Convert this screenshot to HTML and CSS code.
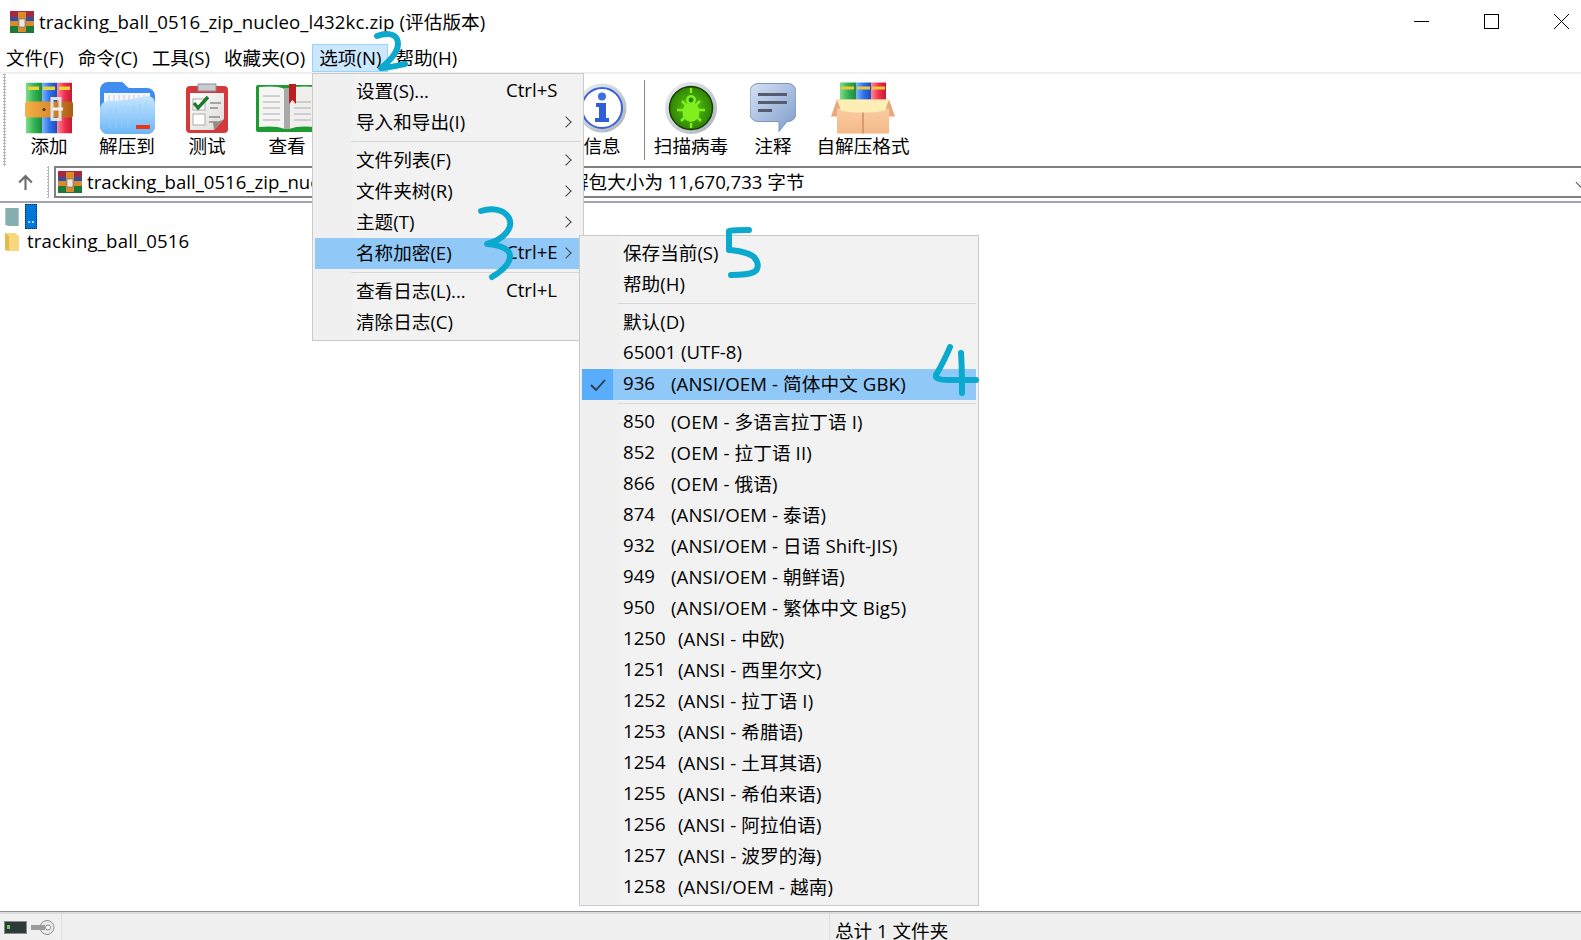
FILE: index.html
```html
<!DOCTYPE html>
<html lang="zh-CN">
<head>
<meta charset="utf-8">
<title>tracking_ball_0516_zip_nucleo_l432kc.zip (评估版本)</title>
<link rel="stylesheet" href="styles.css">
</head>
<body>
<svg class="defs" aria-hidden="true">
  <defs>
    <linearGradient id="gGreen" x1="0" x2="1" y1="0" y2="0"><stop offset="0" stop-color="#7fdc8a"/><stop offset=".5" stop-color="#34b457"/><stop offset="1" stop-color="#1c8a3c"/></linearGradient>
    <linearGradient id="gBlue" x1="0" x2="1" y1="0" y2="0"><stop offset="0" stop-color="#7fb4ff"/><stop offset=".5" stop-color="#2f73ea"/><stop offset="1" stop-color="#1b4db8"/></linearGradient>
    <linearGradient id="gRed" x1="0" x2="1" y1="0" y2="0"><stop offset="0" stop-color="#ff8a9c"/><stop offset=".5" stop-color="#f0324f"/><stop offset="1" stop-color="#c21a35"/></linearGradient>
    <linearGradient id="gBelt" x1="0" x2="1" y1="0" y2="0"><stop offset="0" stop-color="#f4b24a"/><stop offset=".55" stop-color="#d98a2b"/><stop offset="1" stop-color="#a85c14"/></linearGradient>
    <linearGradient id="gFolder" x1="0" x2="0" y1="0" y2="1"><stop offset="0" stop-color="#c6e6ff"/><stop offset="1" stop-color="#6cb6f7"/></linearGradient>
    <linearGradient id="gPaper" x1="0" x2="1" y1="0" y2="1"><stop offset="0" stop-color="#fff"/><stop offset="1" stop-color="#dcd8d4"/></linearGradient>
    <linearGradient id="gRing" x1="0" x2="1" y1="0" y2="1"><stop offset="0" stop-color="#eef1f6"/><stop offset="1" stop-color="#a9b0ba"/></linearGradient>
    <radialGradient id="gBug"><stop offset="0" stop-color="#5ecb12"/><stop offset="1" stop-color="#2d8404"/></radialGradient>
    <linearGradient id="gNote" x1="0" x2="1" y1="0" y2="1"><stop offset="0" stop-color="#d5e1f5"/><stop offset="1" stop-color="#7d9cc9"/></linearGradient>
    <linearGradient id="gBox" x1="0" x2="0" y1="0" y2="1"><stop offset="0" stop-color="#f9cca0"/><stop offset="1" stop-color="#f4b98a"/></linearGradient>
    <symbol id="rar" viewBox="0 0 48 51" preserveAspectRatio="none">
      <rect x="1" y="0" width="16" height="51" fill="url(#gGreen)"/>
      <rect x="17" y="0" width="15" height="51" fill="url(#gBlue)"/>
      <rect x="32" y="0" width="15" height="51" fill="url(#gRed)"/>
      <rect x="3" y="4" width="11" height="3.5" fill="#ecd33a"/>
      <rect x="18" y="4" width="12" height="3.5" fill="#ecd33a"/>
      <rect x="34" y="4" width="11" height="3.5" fill="#ecd33a"/>
      <rect x="0" y="19" width="48" height="16" rx="2" fill="url(#gBelt)"/>
      <path d="M27 16h8v21h-8z" fill="none" stroke="#dfe2e6" stroke-width="3"/>
      <rect x="28" y="25" width="10" height="3" fill="#f3f3f3"/>
      <circle cx="19" cy="27" r="1.6" fill="#5d3208"/>
    </symbol>
    <symbol id="rar-small" viewBox="0 0 24 22" preserveAspectRatio="none">
      <rect x="0" y="0" width="24" height="22" fill="#7a2030"/>
      <rect x="0" y="0" width="24" height="6" fill="#a8283f"/>
      <rect x="0" y="6" width="24" height="5" fill="#2f4fa0"/>
      <rect x="0" y="15" width="24" height="7" fill="#1c7a38"/>
      <rect x="0" y="10" width="24" height="5" fill="#d98a2b"/>
      <rect x="8" y="1" width="8" height="20" fill="#d98a2b"/>
      <rect x="9" y="8" width="6" height="8" fill="#e8e8e8" stroke="#777" stroke-width=".7"/>
    </symbol>
  </defs>
</svg>

<div class="window">
  <header class="titlebar">
    <svg class="title-icon"><use href="#rar-small"/></svg>
    <span class="title-text">tracking_ball_0516_zip_nucleo_l432kc.zip (评估版本)</span>
    <div class="controls">
      <svg class="ctl" viewBox="0 0 16 16"><path d="M0 7.500h15" stroke="#000" fill="none"/></svg>
      <svg class="ctl" viewBox="0 0 16 16"><rect x=".5" y=".5" width="14" height="14" stroke="#000" fill="none"/></svg>
      <svg class="ctl" viewBox="0 0 16 16"><path d="M0 0l15 15M15 0L0 15" stroke="#000" fill="none"/></svg>
    </div>
  </header>

  <nav class="menubar">
    <span class="mitem">文件(F)</span>
    <span class="mitem">命令(C)</span>
    <span class="mitem">工具(S)</span>
    <span class="mitem">收藏夹(O)</span>
    <span class="mitem mitem-open">选项(N)</span>
    <span class="mitem">帮助(H)</span>
  </nav>

  <section class="toolbar">
    <div class="tool w78">
      <svg class="ticon" width="48" height="51" viewBox="0 0 48 51"><use href="#rar"/></svg>
      <span>添加</span>
    </div>
    <div class="tool w78">
      <svg class="ticon" width="55" height="52" viewBox="0 0 55 52">
        <path d="M0 8a8 8 0 0 1 8-8h13c4 0 5 6 9 6h17a8 8 0 0 1 8 8v30a8 8 0 0 1-8 8H8a8 8 0 0 1-8-8z" fill="#3f8df0"/>
        <path d="M4 11h46v16H4z" fill="#f4f6fa"/>
        <path d="M9 13v8M14 13v8M19 13v8M24 13v8M29 13v8M34 13v8M39 13v8M44 13v8" stroke="#c3ccd8"/>
        <path d="M0 28c0-5 3-9 8-9 12 0 26-2 39-5 5 0 8 3 8 8v22a8 8 0 0 1-8 8H8a8 8 0 0 1-8-8z" fill="url(#gFolder)"/>
        <path d="M10 26v20M16 25v21M22 25v21M28 24v22M34 23v15M40 22v16M46 20v18" stroke="#9ccdf6" stroke-width=".8"/>
        <rect x="36" y="43" width="14" height="4" fill="#ee3516"/>
      </svg>
      <span>解压到</span>
    </div>
    <div class="tool w82">
      <svg class="ticon" width="42" height="50" viewBox="0 0 42 50">
        <rect x="0" y="3" width="42" height="47" rx="4" fill="#d4393c"/>
        <path d="M4 10h34v26l-10 11H4z" fill="url(#gPaper)"/>
        <path d="M28 47l10-11c-3 2-7 3-11 3z" fill="#8f8c8a"/>
        <path d="M12 1h18v7H12z" fill="#c9ccd0" stroke="#8b8f95"/>
        <rect x="7" y="16" width="12" height="11" fill="#fff" stroke="#aaa"/>
        <rect x="7" y="31" width="12" height="11" fill="#fff" stroke="#aaa"/>
        <path d="M8 20l4 5 10-11" fill="none" stroke="#1d7a2c" stroke-width="3.400"/>
        <path d="M24 20h11M24 25h8M23 34h11M23 39h8" stroke="#8d8d8d" stroke-width="1.500"/>
      </svg>
      <span>测试</span>
    </div>
    <div class="tool w78">
      <svg class="ticon" width="62" height="48" viewBox="0 0 62 48">
        <rect x="0" y="1" width="62" height="47" rx="2" fill="#1e9a33"/>
        <path d="M3 3c10-1 20-1 26 2v40c-7-3-17-3-26-2z" fill="#f5f5f4"/>
        <path d="M59 3c-10-1-20-1-26 2v40c7-3 17-3 26-2z" fill="#f0efee"/>
        <rect x="28" y="4" width="6" height="41" fill="#a9a9a9"/>
        <path d="M7 12h17M7 18h17M7 24h17M7 30h17M7 36h17M38 18h17M38 24h17M38 30h17M38 36h17" stroke="#c4c4c4" stroke-width="1.500"/>
        <path d="M33 0h7v20l-3.500-4-3.500 4z" fill="#b71f22"/>
      </svg>
      <span>查看</span>
    </div>
    <div class="tool-gap"></div>
    <div class="tool w76">
      <svg class="ticon" width="50" height="50" viewBox="0 0 50 50">
        <circle cx="25" cy="25" r="24.500" fill="url(#gRing)"/>
        <circle cx="25" cy="25" r="20" fill="#fff" stroke="#3a62d8" stroke-width="2"/>
        <circle cx="25" cy="13.500" r="4" fill="#3d6fe0"/>
        <path d="M19 20h10v15h3v4H18v-4h4V24h-3z" fill="#2f5ed6"/>
      </svg>
      <span>信息</span>
    </div>
    <span class="tool-sep"></span>
    <div class="tool w80">
      <svg class="ticon" width="52" height="52" viewBox="0 0 52 52">
        <circle cx="26" cy="26" r="26" fill="url(#gRing)"/>
        <circle cx="26" cy="26" r="21.500" fill="url(#gBug)" stroke="#1b3d02" stroke-width="1.500"/>
        <ellipse cx="26" cy="30" rx="8.500" ry="10" fill="#7fef1f"/>
        <circle cx="26" cy="18" r="5" fill="#7fef1f"/>
        <path d="M17 19l5 5M35 19l-5 5M12 28h9M40 28h-9M16 39l6-6M36 39l-6-6M26 6v5M26 41v5" stroke="#7fef1f" stroke-width="2.500" fill="none"/>
        <circle cx="26" cy="18" r="2.400" fill="#2d8404"/>
      </svg>
      <span>扫描病毒</span>
    </div>
    <div class="tool w84">
      <svg class="ticon" width="46" height="49" viewBox="0 0 46 49">
        <path d="M8 0h30a8 8 0 0 1 8 8v22a8 8 0 0 1-8 8h-1L29 48V38H8a8 8 0 0 1-8-8V8a8 8 0 0 1 8-8z" fill="url(#gNote)" stroke="#7d95bb"/>
        <path d="M8 11h29M8 19h29M8 27h14" stroke="#555d6c" stroke-width="3"/>
      </svg>
      <span>注释</span>
    </div>
    <div class="tool w96">
      <svg class="ticon" width="64" height="51" viewBox="0 0 64 51">
        <rect x="9" y="0" width="16" height="22" fill="url(#gGreen)"/>
        <rect x="25" y="0" width="15" height="22" fill="url(#gBlue)"/>
        <rect x="40" y="0" width="15" height="22" fill="url(#gRed)"/>
        <rect x="10" y="4" width="13" height="3" fill="#ecc93a"/>
        <rect x="26" y="4" width="13" height="3" fill="#ecc93a"/>
        <rect x="41" y="4" width="13" height="3" fill="#ecc93a"/>
        <path d="M6 17h52l6 17H0z" fill="#e9a77c"/>
        <rect x="6" y="26" width="52" height="25" fill="url(#gBox)"/>
        <path d="M6 17h52l-4 11c-14 3-30 3-44 0z" fill="#fdeeb5"/>
        <path d="M32 30v21" stroke="#cf8b62" stroke-width="1.500"/>
      </svg>
      <span>自解压格式</span>
    </div>
  </section>

  <section class="addressbar">
    <div class="upcell">
      <svg class="up" viewBox="0 0 16 16"><path d="M8 15V2M2 8l6-6 6 6" fill="none" stroke="#6f6f6f" stroke-width="2"/></svg>
      <span class="grip"></span>
    </div>
    <div class="field">
      <svg class="addr-icon"><use href="#rar-small"/></svg>
      <span class="addr-text">tracking_ball_0516_zip_nucleo_l432kc.zip - ZIP 压缩文件, 解包大小为 11,670,733 字节</span>
      <span class="drop"></span>
    </div>
  </section>

  <main class="list">
    <div class="row">
      <svg class="ficon" viewBox="0 0 14 21"><path d="M0 1h14v19H4l-4-1z" fill="#85aeb0"/></svg>
      <span class="updir">..</span>
    </div>
    <div class="row">
      <svg class="ficon" viewBox="0 0 14 20"><path d="M0 1h10l4 3v15H4l-4-1z" fill="#f8d77f"/><path d="M0 1l4 3v15l-4-1z" fill="#e4b94e"/></svg>
      <span class="fname">tracking_ball_0516</span>
    </div>
  </main>

  <footer class="statusbar">
    <div class="st-icons">
      <svg width="23" height="13" viewBox="0 0 23 13"><rect x=".5" y=".5" width="22" height="12" fill="#2d3a3a" stroke="#8a8a8a"/><rect x="3" y="4" width="3" height="4" fill="#5fd35f"/></svg>
      <svg width="25" height="17" viewBox="0 0 25 17"><circle cx="17" cy="8.500" r="7" fill="#e8e8e8" stroke="#8f8f8f"/><rect x="1" y="6" width="14" height="5" fill="#9b9b9b"/><circle cx="18" cy="8.500" r="2.500" fill="#fff" stroke="#888"/></svg>
    </div>
    <div class="st-mid"></div>
    <div class="st-total">总计 1 文件夹</div>
  </footer>

  <div class="menu menu-main">
    <div class="mrow"><span class="mlabel">设置(S)...</span><span class="mkey">Ctrl+S</span></div>
    <div class="mrow"><span class="mlabel">导入和导出(I)</span><span class="arrow"></span></div>
    <div class="msep"></div>
    <div class="mrow"><span class="mlabel">文件列表(F)</span><span class="arrow"></span></div>
    <div class="mrow"><span class="mlabel">文件夹树(R)</span><span class="arrow"></span></div>
    <div class="mrow"><span class="mlabel">主题(T)</span><span class="arrow"></span></div>
    <div class="mrow mrow-on"><span class="mlabel">名称加密(E)</span><span class="mkey">Ctrl+E</span><span class="arrow"></span></div>
    <div class="msep"></div>
    <div class="mrow"><span class="mlabel">查看日志(L)...</span><span class="mkey">Ctrl+L</span></div>
    <div class="mrow"><span class="mlabel">清除日志(C)</span></div>
  </div>

  <div class="menu menu-sub">
    <div class="mrow"><span class="mlabel">保存当前(S)</span></div>
    <div class="mrow"><span class="mlabel">帮助(H)</span></div>
    <div class="msep"></div>
    <div class="mrow"><span class="mlabel">默认(D)</span></div>
    <div class="mrow"><span class="mlabel">65001 (UTF-8)</span></div>
    <div class="mrow mrow-on mrow-checked">
      <span class="check"><svg width="16" height="12" viewBox="0 0 16 12"><path d="M1 6l5 5L15 1" fill="none" stroke="#2c3a48" stroke-width="1.800"/></svg></span>
      <span class="code">936</span><span class="cname">(ANSI/OEM - 简体中文 GBK)</span>
    </div>
    <div class="msep"></div>
    <div class="mrow"><span class="code">850</span><span class="cname">(OEM - 多语言拉丁语 I)</span></div>
    <div class="mrow"><span class="code">852</span><span class="cname">(OEM - 拉丁语 II)</span></div>
    <div class="mrow"><span class="code">866</span><span class="cname">(OEM - 俄语)</span></div>
    <div class="mrow"><span class="code">874</span><span class="cname">(ANSI/OEM - 泰语)</span></div>
    <div class="mrow"><span class="code">932</span><span class="cname">(ANSI/OEM - 日语 Shift-JIS)</span></div>
    <div class="mrow"><span class="code">949</span><span class="cname">(ANSI/OEM - 朝鲜语)</span></div>
    <div class="mrow"><span class="code">950</span><span class="cname">(ANSI/OEM - 繁体中文 Big5)</span></div>
    <div class="mrow"><span class="code code4">1250</span><span class="cname">(ANSI - 中欧)</span></div>
    <div class="mrow"><span class="code code4">1251</span><span class="cname">(ANSI - 西里尔文)</span></div>
    <div class="mrow"><span class="code code4">1252</span><span class="cname">(ANSI - 拉丁语 I)</span></div>
    <div class="mrow"><span class="code code4">1253</span><span class="cname">(ANSI - 希腊语)</span></div>
    <div class="mrow"><span class="code code4">1254</span><span class="cname">(ANSI - 土耳其语)</span></div>
    <div class="mrow"><span class="code code4">1255</span><span class="cname">(ANSI - 希伯来语)</span></div>
    <div class="mrow"><span class="code code4">1256</span><span class="cname">(ANSI - 阿拉伯语)</span></div>
    <div class="mrow"><span class="code code4">1257</span><span class="cname">(ANSI - 波罗的海)</span></div>
    <div class="mrow"><span class="code code4">1258</span><span class="cname">(ANSI/OEM - 越南)</span></div>
  </div>

  <svg class="ink" viewBox="0 0 1581 940" aria-hidden="true">
    <path d="M377 36c8-3 17-3 20 3 4 9-5 20-16 29 7 0 15-2 24-4"/>
    <path d="M481 211c9-3 22-3 28 7 5 10-6 22-22 26 10 1 23 4 23 12 0 8-8 15-18 21"/>
    <path d="M950 347c-4 10-10 21-14 28-1 4 5 5 13 5 9 0 18 0 27 0M961 353c1 13 1 27 1 40"/>
    <path d="M749 230c-6 0-14 0-20 1 0 6 0 13 0 19 9 1 19 2 25 7 5 6 5 12 0 15-6 3-15 3-23 3"/>
  </svg>
</div>
</body>
</html>
```

FILE: styles.css
```css
html, body {
  margin: 0;
  height: 100%;
  overflow: hidden;
  background: #fff;
}

body {
  font-family: "Open Sans", "Noto Sans CJK SC", sans-serif;
  font-size: 18.6px;
  color: #000;
}

.defs {
  position: absolute;
  width: 0;
  height: 0;
}

.window {
  position: relative;
  display: flex;
  flex-direction: column;
  width: 1581px;
  height: 940px;
  overflow: hidden;
}

/* title bar */
.titlebar {
  display: flex;
  align-items: center;
  height: 44px;
  padding-left: 10px;
  flex: none;
}

.title-icon {
  width: 24px;
  height: 22px;
  margin-right: 5px;
}

.title-text {
  white-space: nowrap;
  line-height: 44px;
  letter-spacing: .1px;
}

.controls {
  display: flex;
  gap: 54px;
  margin-left: auto;
  padding-right: 11px;
}

.ctl {
  width: 16px;
  height: 16px;
}

/* menu bar */
.menubar {
  display: flex;
  height: 28px;
  flex: none;
}

.mitem {
  padding: 0 7px;
  line-height: 28px;
  white-space: nowrap;
}

.mitem:first-child {
  padding-left: 6px;
}

.mitem-open {
  background: #cce8ff;
  box-shadow: inset 0 0 0 1px #99d1ff;
}

/* toolbar */
.toolbar {
  display: flex;
  height: 92px;
  flex: none;
  border-top: 2px solid #f0f0f0;
  padding-left: 10px;
  position: relative;
  background-image: radial-gradient(circle, #b5b5b5 1px, transparent 1.2px);
  background-size: 3px 3px;
  background-position: 3px 2px;
  background-repeat: repeat-y;
}

.tool {
  display: flex;
  flex-direction: column;
  align-items: center;
  flex: none;
  padding-top: 8px;
  box-sizing: border-box;
}

.ticon {
  display: block;
  height: 52px;
  flex: none;
}

.tool span {
  line-height: 24px;
  white-space: nowrap;
}

.tool-gap {
  flex: none;
  width: 238px;
}

.w76 { width: 76px; }
.w78 { width: 78px; }
.w80 { width: 80px; }
.w82 { width: 82px; }
.w84 { width: 84px; }
.w96 { width: 96px; }

.tool-sep {
  flex: none;
  width: 1px;
  height: 80px;
  margin: 6px 6px 0 4px;
  background: #8a8a8a;
}

/* address bar */
.addressbar {
  display: flex;
  flex: none;
  height: 32px;
  padding-bottom: 3px;
  border-bottom: 2px solid #a3a3b3;
}

.upcell {
  display: flex;
  align-items: center;
  justify-content: space-between;
  width: 54px;
  padding: 0 5px 0 17px;
  box-sizing: border-box;
}

.up {
  width: 17px;
  height: 17px;
}

.grip {
  width: 2px;
  height: 32px;
  background-image: radial-gradient(circle, #b5b5b5 1px, transparent 1.2px);
  background-size: 3px 3px;
}

.field {
  display: flex;
  align-items: center;
  flex: 1;
  min-width: 0;
  border: 2px solid #808080;
  border-right: none;
  box-sizing: border-box;
  padding-left: 2px;
}

.addr-icon {
  width: 24px;
  height: 22px;
  margin-right: 5px;
  flex: none;
}

.addr-text {
  white-space: nowrap;
  line-height: 26px;
}

.drop {
  width: 6px;
  height: 6px;
  margin-left: auto;
  margin-right: -3px;
  border-right: 1.5px solid #555;
  border-bottom: 1.5px solid #555;
  transform: rotate(45deg);
}

/* file list */
.list {
  flex: 1;
  min-height: 0;
  padding: 1px 0 0 5px;
}

.row {
  display: flex;
  align-items: center;
  height: 25px;
}

.ficon {
  width: 14px;
  height: 20px;
  flex: none;
}

.updir {
  width: 12px;
  height: 25px;
  margin-left: 6px;
  background: #0078d7;
  outline: 1px dotted #1a1a6e;
  outline-offset: -1px;
  color: #fff;
  font-size: 14px;
  line-height: 27px;
  text-align: center;
}

.fname {
  margin-left: 8px;
  padding-bottom: 2px;
  white-space: nowrap;
  line-height: 22px;
  letter-spacing: .17px;
}

/* status bar */
.statusbar {
  display: flex;
  flex: none;
  height: 26px;
  border-top: 1px solid #8f8f9c;
  box-shadow: inset 0 2px 0 #dcdcdc;
  background: #f0f0f0;
  padding-top: 2px;
}

.st-icons {
  display: flex;
  align-items: center;
  gap: 3px;
  width: 62px;
  padding-left: 4px;
  box-sizing: border-box;
  border-right: 1px solid #dedede;
}

.st-mid {
  width: 767px;
  border-right: 1px solid #dedede;
}

.st-total {
  padding-left: 5px;
  line-height: 34px;
  white-space: nowrap;
}

/* popup menus */
.menu {
  position: absolute;
  box-sizing: border-box;
  padding: 2px;
  border: 1px solid #cacaca;
  background: linear-gradient(to right, #f0f0f0 40px, #f2f2f2 40px);
}

.menu-main {
  left: 312px;
  top: 73px;
  width: 272px;
  height: 268px;
}

.menu-sub {
  left: 579px;
  top: 235px;
  width: 400px;
  height: 671px;
}

.mrow {
  position: relative;
  display: flex;
  align-items: center;
  height: 31px;
  padding-left: 41px;
  padding-bottom: 4px;
  box-sizing: border-box;
  white-space: nowrap;
}

.mrow-on {
  background: #90c8f7;
}

.mlabel {
  flex: 1;
}

.mkey {
  width: 53px;
  margin-right: 22px;
}

.arrow {
  flex: none;
  position: absolute;
  right: 11px;
  top: 11px;
  width: 7px;
  height: 7px;
  border-top: 1px solid #444;
  border-right: 1px solid #444;
  transform: rotate(45deg);
}

.msep {
  height: 1px;
  margin: 3px 0 3px 36px;
  background: #d7d7d7;
}

.check {
  position: absolute;
  left: 0;
  top: 0;
  display: flex;
  align-items: center;
  justify-content: center;
  width: 31px;
  height: 31px;
  background: #58adfc;
}

.code {
  flex: none;
  width: 48px;
}

.code4 {
  width: 55px;
}

.cname {
  letter-spacing: .12px;
}

/* hand-drawn annotations over the screenshot */
.ink {
  position: absolute;
  left: 0;
  top: 0;
  width: 1581px;
  height: 940px;
  pointer-events: none;
  fill: none;
  stroke: #0aa9cd;
  stroke-width: 6;
  stroke-linecap: round;
  stroke-linejoin: round;
}
```
